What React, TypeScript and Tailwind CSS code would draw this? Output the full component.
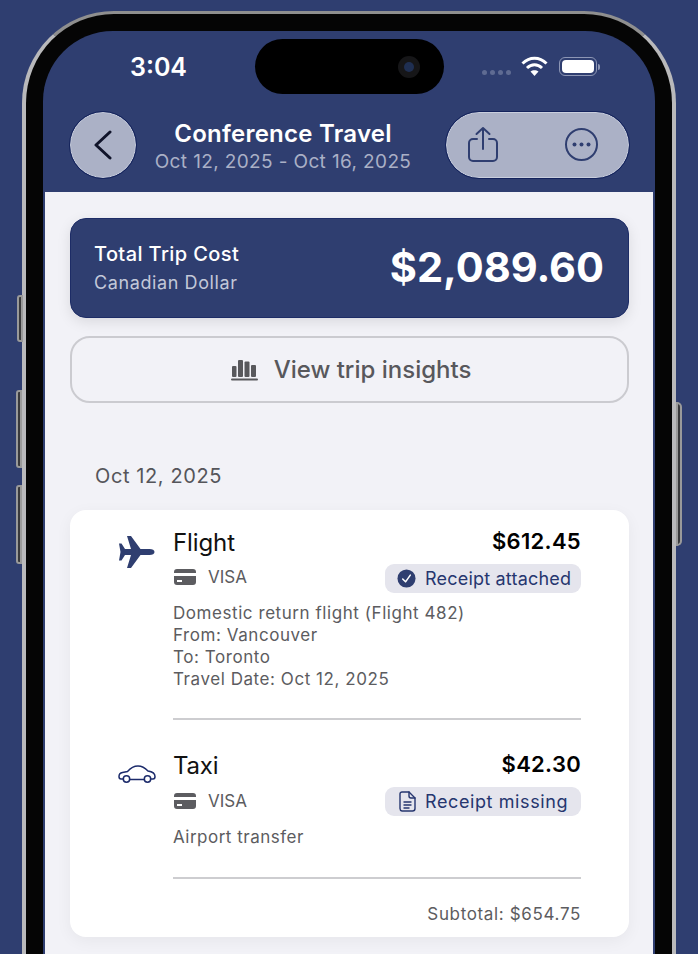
import React from "react";

const SideButton = ({ className }: { className: string }) => (
  <div className={`absolute w-[6px] border-2 border-[#9a9a9a] bg-[#3a3a3c] ${className}`} />
);

const CardIcon = () => (
  <svg width="22" height="16" viewBox="0 0 22 16" className="ml-[1px] shrink-0">
    <path fill="#5c5c60" d="M3 0h16a3 3 0 0 1 3 3v1H0V3a3 3 0 0 1 3-3zM0 7h22v6a3 3 0 0 1-3 3H3a3 3 0 0 1-3-3zm3 4v2h5v-2z" />
  </svg>
);

const Plane = () => (
  <svg width="37" height="34" viewBox="0 0 37 34" fill="#2f3e70">
    <path d="M36.500 17c0-1.700-2-3-5-3H22.500L13 1H9l4 13H7L3.500 8.500H1l1.500 8.500L1 25.500h2.500L7 20h6L9 33h4l9.500-13h9c3 0 5-1.300 5-3z" />
  </svg>
);

const Car = () => (
  <svg width="38" height="19" viewBox="0 0 38 19" fill="none" stroke="#1c2b6b" strokeWidth="1.500" strokeLinejoin="round">
    <path d="M5 15H3c-1.300 0-2-1-2-2.500 0-2.200 1.300-3.600 3.500-4L9.500 7.500C12.500 4 15.500 2 20 2c4 0 7 1.800 10 5 3.500.5 7 2 7 5.500 0 1.500-.6 2.500-2 2.500h-2M12 15.500h14.500" />
    <circle cx="8.500" cy="15" r="3.200" />
    <circle cx="29.500" cy="15" r="3.200" />
  </svg>
);

const Pill = ({ icon, label, className }: { icon: React.ReactNode; label: string; className: string }) => (
  <div className={`flex h-[29px] w-[196px] items-center rounded-[9px] bg-[#e5e5ed] text-[18px] text-[#26366f] ${className}`}>
    {icon}
    <span>{label}</span>
  </div>
);

const CheckBadge = () => (
  <svg width="19" height="19" viewBox="0 0 20 20">
    <circle cx="10" cy="10" r="9.500" fill="#2f3e70" />
    <path d="M6 10.500l3 3 5-7" fill="none" stroke="#fff" strokeWidth="1.600" strokeLinecap="round" strokeLinejoin="round" />
  </svg>
);

const DocIcon = () => (
  <svg width="17" height="21" viewBox="0 0 17 21" fill="none" stroke="#26366f" strokeWidth="1.400" strokeLinejoin="round" strokeLinecap="round">
    <path d="M3 1h7l6 6v10.500a2.500 2.500 0 0 1-2.500 2.500h-10.500A2.500 2.500 0 0 1 1 17.500V3a2 2 0 0 1 2-2z" />
    <path d="M10 1v4a2 2 0 0 0 2 2h4M5 11h7M5 14h7M5 17h5" />
  </svg>
);

export default function App() {
  return (
    <div className="relative h-[954px] w-[698px] overflow-hidden bg-[#2f3e70] pl-[22px] pt-[11px] text-black [font-family:Inter,sans-serif]">
      <SideButton className="left-[17px] top-[295px] h-[47px] rounded-l-[3px]" />
      <SideButton className="left-[16px] top-[390px] h-[78px] rounded-l-[3px]" />
      <SideButton className="left-[16px] top-[485px] h-[79px] rounded-l-[3px]" />
      <SideButton className="left-[676px] top-[402px] h-[144px] rounded-r-[5px]" />

      <div className="h-[1000px] w-[654px] rounded-t-[92px] border-x-[4px] border-t-[3px] border-x-[#b9b9bb] border-t-[#8f8f8f] bg-[#050505] px-[17px] pt-[17px]">
        <div className="h-full w-[612px] overflow-hidden rounded-t-[70px] bg-[#2f3e70] px-[2px]">
          {/* status bar */}
          <div className="flex h-[80px] items-start pl-[85px] text-white">
            <div className="w-[125px] pt-[20px] text-[25px] font-semibold leading-[32px]">3:04</div>
            <div className="mt-[8px] flex h-[55px] w-[189px] items-center justify-end rounded-full bg-black pr-[24px]">
              <div className="flex h-[22px] w-[22px] items-center justify-center rounded-full bg-[#161618]">
                <div className="h-[10px] w-[10px] rounded-full bg-[#1f2f52]" />
              </div>
            </div>
            <div className="ml-[38px] mt-[39px] flex gap-[3px]">
              <div className="h-[5px] w-[5px] rounded-full bg-[#5f6b92]" />
              <div className="h-[5px] w-[5px] rounded-full bg-[#5f6b92]" />
              <div className="h-[5px] w-[5px] rounded-full bg-[#5f6b92]" />
              <div className="h-[5px] w-[5px] rounded-full bg-[#5f6b92]" />
            </div>
            <svg width="27" height="20" viewBox="0 0 27 20" className="ml-[10px] mt-[25px]" fill="none" stroke="#fff" strokeWidth="3">
              <path d="M1.500 7.500C8.500 .5 18.500 .5 25.500 7.500" />
              <path d="M6 12c4.500-4.200 10.500-4.200 15 0" />
              <path d="M13.500 20l-4-4.500c2.300-1.800 5.700-1.800 8 0z" fill="#fff" stroke="none" />
            </svg>
            <div className="ml-[11px] mt-[26px] flex items-center">
              <div className="h-[19px] w-[38px] rounded-[6px] border border-[#8d96b5] p-[2px]">
                <div className="h-full w-full rounded-[4px] bg-white" />
              </div>
              <div className="ml-[1px] h-[6px] w-[2px] rounded-r-sm bg-[#8d96b5]" />
            </div>
          </div>

          {/* nav */}
          <div className="flex h-[67px] items-center pl-[25px] pr-[24px]">
            <button className="flex h-[66px] w-[66px] shrink-0 items-center justify-center rounded-full border border-[#c9cedd] bg-[#abb1c6] outline-1 outline-[#14235c]">
              <svg width="20" height="30" viewBox="0 0 20 30" fill="none" stroke="#10142a" strokeWidth="3" strokeLinecap="round" strokeLinejoin="round">
                <path d="M17 2L3 15l14 13" />
              </svg>
            </button>
            <div className="w-[294px] shrink-0 pt-[4px] text-center">
              <div className="text-[24px] font-semibold leading-[30px] tracking-[0.25px] text-white">Conference Travel</div>
              <div className="text-[19px] leading-[26px] tracking-[0.37px] text-[#aab0c6]">Oct 12, 2025 - Oct 16, 2025</div>
            </div>
            <div className="ml-[16px] flex h-[66px] w-[183px] shrink-0 items-center justify-between rounded-full border border-[#c9cedd] bg-[#abb1c6] pl-[21px] pr-[30px] outline-1 outline-[#14235c]">
              <svg width="30" height="37" viewBox="0 0 30 37" fill="none" stroke="#2f3e70" strokeWidth="2" strokeLinecap="round" strokeLinejoin="round">
                <path d="M9 13H5a4 4 0 0 0-4 4v14a4 4 0 0 0 4 4h20a4 4 0 0 0 4-4V17a4 4 0 0 0-4-4h-4" />
                <path d="M15 23V2M8.500 8L15 2l6.500 6" />
              </svg>
              <svg width="33" height="33" viewBox="0 0 33 33" fill="none" stroke="#2f3e70" strokeWidth="2">
                <circle cx="16.500" cy="16.500" r="15.500" />
                <circle cx="9.500" cy="16.500" r="2" fill="#2f3e70" stroke="none" />
                <circle cx="16.500" cy="16.500" r="2" fill="#2f3e70" stroke="none" />
                <circle cx="23.500" cy="16.500" r="2" fill="#2f3e70" stroke="none" />
              </svg>
            </div>
          </div>

          {/* content */}
          <div className="mt-[14px] h-full bg-[#f2f2f7] pl-[25px] pr-[24px] pt-[26px]">
            <div className="flex h-[100px] items-center justify-between rounded-[16px] border border-[#1d2c66] bg-[#2f3e70] pl-[23px] pr-[24px] text-white shadow-[0_4px_14px_rgba(0,0,0,0.10)]">
              <div>
                <div className="text-[20px] font-medium leading-[27px] tracking-[0.4px]">Total Trip Cost</div>
                <div className="mt-[1px] text-[18px] leading-[27px] tracking-[0.6px] text-[#c3c8d9]">Canadian Dollar</div>
              </div>
              <div className="text-[41.5px] font-bold leading-none">$2,089.60</div>
            </div>

            <button className="mt-[18px] flex h-[67px] w-full items-center justify-center gap-[16px] rounded-[20px] border-2 border-[#cbcbd0] pl-[3px] text-[24px] font-medium text-[#58585c]">
              <svg width="27" height="23" viewBox="0 0 27 23" fill="#58585c">
                <rect x="1" y="8" width="4.500" height="11" rx="1" />
                <rect x="7" y="2" width="5" height="17" rx="1" />
                <rect x="13.500" y="3.500" width="5" height="15.500" rx="1" />
                <rect x="20" y="7" width="5" height="12" rx="1" />
                <rect x="0" y="20.500" width="27" height="2" rx="1" />
              </svg>
              <span>View trip insights</span>
            </button>

            <div className="mt-[59px] pl-[25px] text-[20px] leading-[28px] tracking-[0.6px] text-[#55555a]">Oct 12, 2025</div>

            <div className="mt-[20px] h-[427px] rounded-[16px] bg-white pr-[48px] pt-[17px] shadow-[0_4px_16px_rgba(0,0,0,0.05)]">
              {/* flight */}
              <div className="flex">
                <div className="w-[103px] shrink-0 pl-[48px] pt-[8px]">
                  <Plane />
                </div>
                <div className="flex-1">
                  <div className="flex items-start justify-between">
                    <div>
                      <div className="mt-[1px] text-[24px] leading-[30px] tracking-[-0.1px] text-[#111]">Flight</div>
                      <div className="mt-[7px] flex items-center gap-[12px] text-[17px] leading-[24px] text-[#5c5c60]">
                        <CardIcon />
                        <span>VISA</span>
                      </div>
                    </div>
                    <div className="flex flex-col items-end">
                      <div className="-mt-[1px] text-[22px] font-semibold leading-[30px] tracking-[0.3px]">$612.45</div>
                      <div className="mt-[8px]">
                        <Pill icon={<CheckBadge />} label="Receipt attached" className="gap-[9px] pl-[12px] tracking-[0.2px]" />
                      </div>
                    </div>
                  </div>
                  <div className="mt-[9px] text-[17px] leading-[22px] tracking-[0.56px] text-[#5c5c60]">
                    <div>Domestic return flight (Flight 482)</div>
                    <div>From: Vancouver</div>
                    <div>To: Toronto</div>
                    <div>Travel Date: Oct 12, 2025</div>
                  </div>
                  <div className="mt-[28px] h-[2px] bg-[#cdcdd0]" />
                </div>
              </div>

              {/* taxi */}
              <div className="mt-[30px] flex">
                <div className="w-[103px] shrink-0 pl-[48px] pt-[14px]">
                  <Car />
                </div>
                <div className="flex-1">
                  <div className="flex items-start justify-between">
                    <div>
                      <div className="mt-[1px] text-[24px] leading-[30px] tracking-[-0.2px] text-[#111]">Taxi</div>
                      <div className="mt-[8px] flex items-center gap-[12px] text-[17px] leading-[24px] text-[#5c5c60]">
                        <CardIcon />
                        <span>VISA</span>
                      </div>
                    </div>
                    <div className="flex flex-col items-end">
                      <div className="-mt-[1px] text-[22px] font-semibold leading-[30px] tracking-[0.3px]">$42.30</div>
                      <div className="mt-[8px]">
                        <Pill icon={<DocIcon />} label="Receipt missing" className="gap-[9px] pl-[14px] tracking-[0.6px]" />
                      </div>
                    </div>
                  </div>
                  <div className="mt-[10px] text-[17px] leading-[22px] tracking-[0.5px] text-[#5c5c60]">Airport transfer</div>
                  <div className="mt-[29px] h-[2px] bg-[#cdcdd0]" />
                  <div className="mt-[24px] text-right text-[17px] leading-[22px] tracking-[0.65px] text-[#5c5c60]">Subtotal: $654.75</div>
                </div>
              </div>
            </div>
          </div>
        </div>
      </div>
    </div>
  );
}
